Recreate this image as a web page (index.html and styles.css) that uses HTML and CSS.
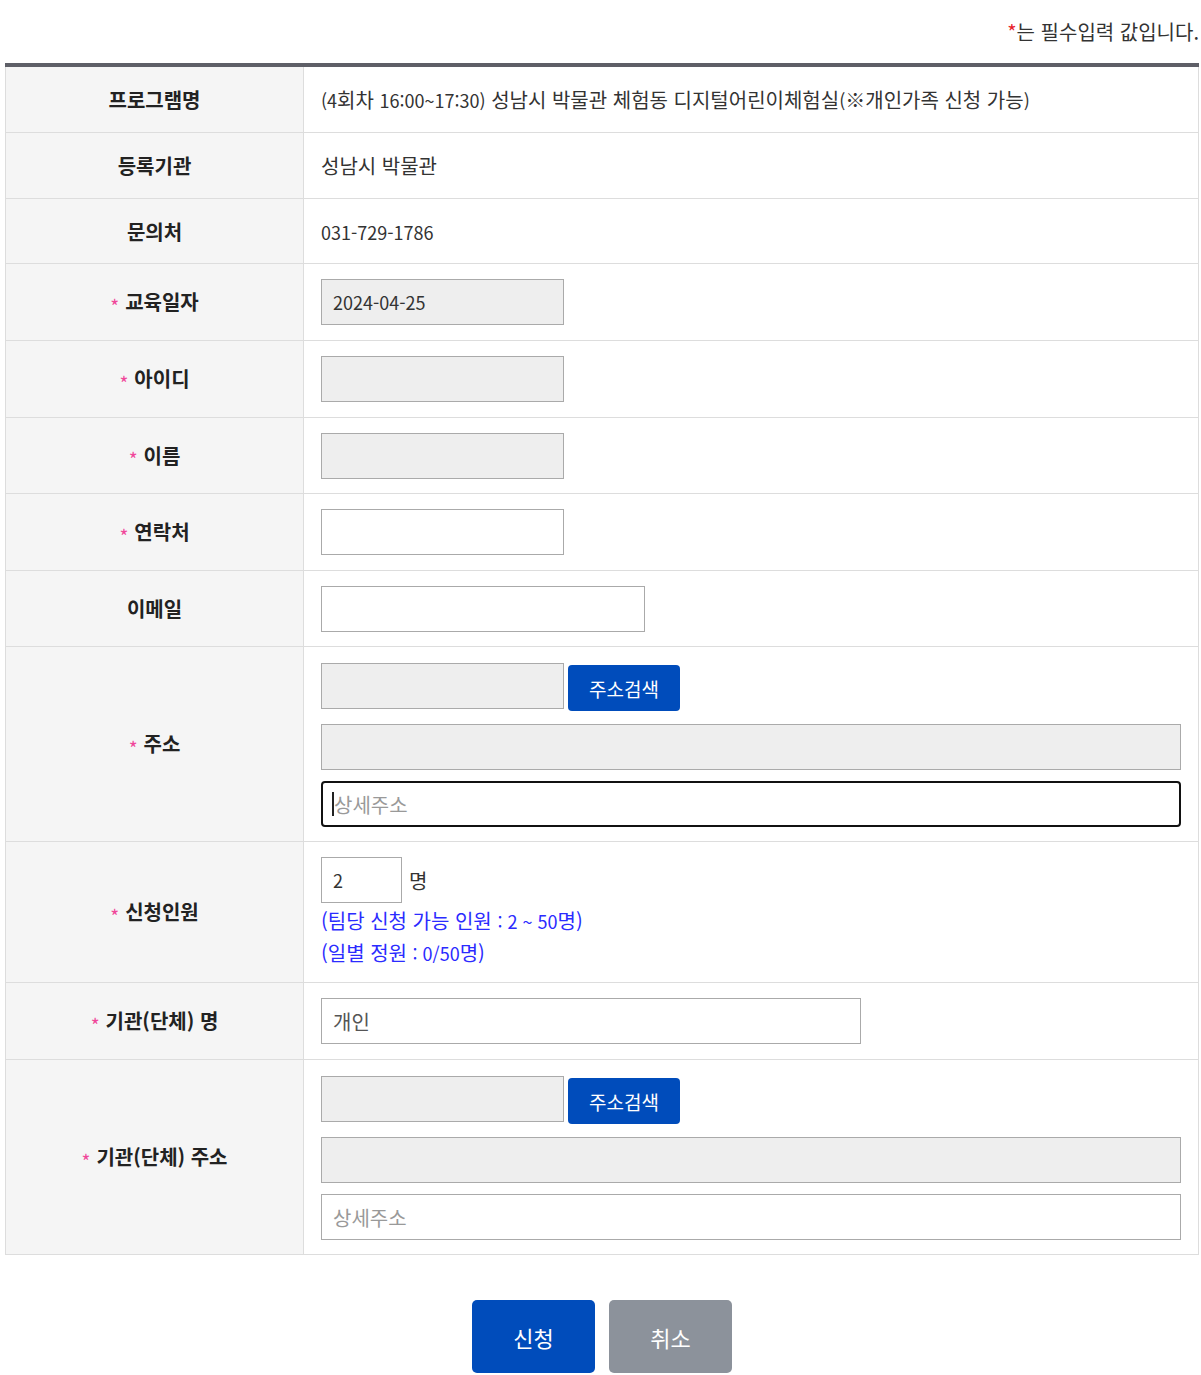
FILE: index.html
```html
<!DOCTYPE html>
<html lang="ko">
<head>
<meta charset="utf-8">
<title>교육 신청</title>
<link rel="stylesheet" href="styles.css">
</head>
<body>
<div class="wrap">
  <p class="note"><span class="star">*</span>는 필수입력 값입니다.</p>
  <table class="form">
    <colgroup><col class="c-th"><col></colgroup>
    <tbody>
      <tr>
        <th>프로그램명</th>
        <td class="txt"><span class="num">(4</span>회차 <span class="num">16:00~17:30)</span> 성남시 박물관 체험동 디지털어린이체험실<span class="num">(</span>※개인가족 신청 가능<span class="num">)</span></td>
      </tr>
      <tr>
        <th>등록기관</th>
        <td class="txt">성남시 박물관</td>
      </tr>
      <tr>
        <th>문의처</th>
        <td class="txt short"><span class="num">031-729-1786</span></td>
      </tr>
      <tr>
        <th><span class="req">*</span>교육일자</th>
        <td><input class="inp ro numv" type="text" value="2024-04-25" readonly></td>
      </tr>
      <tr>
        <th><span class="req">*</span>아이디</th>
        <td><input class="inp ro" type="text" readonly></td>
      </tr>
      <tr>
        <th><span class="req">*</span>이름</th>
        <td class="tight"><input class="inp ro" type="text" readonly></td>
      </tr>
      <tr>
        <th><span class="req">*</span>연락처</th>
        <td><input class="inp" type="text"></td>
      </tr>
      <tr>
        <th>이메일</th>
        <td class="tight"><input class="inp w-mail" type="text"></td>
      </tr>
      <tr>
        <th><span class="req">*</span>주소</th>
        <td class="addr">
          <div class="zip-line">
            <input class="inp ro" type="text" readonly>
            <button class="btn-search" type="button">주소검색</button>
          </div>
          <input class="inp ro full mt15" type="text" readonly>
          <input class="inp full mt11 focus" type="text" placeholder="상세주소">
        </td>
      </tr>
      <tr>
        <th><span class="req">*</span>신청인원</th>
        <td class="people">
          <div class="num-line">
            <input class="inp w-num numv" type="text" value="2">
            <span class="unit">명</span>
          </div>
          <p class="info first">(팀당 신청 가능 인원 <span class="num">: 2 ~ 50</span>명)</p>
          <p class="info">(일별 정원 <span class="num">: 0/50</span>명)</p>
        </td>
      </tr>
      <tr>
        <th><span class="req">*</span>기관(단체) 명</th>
        <td><input class="inp w-org gray" type="text" value="개인"></td>
      </tr>
      <tr>
        <th><span class="req">*</span>기관(단체) 주소</th>
        <td class="addr">
          <div class="zip-line">
            <input class="inp ro" type="text" readonly>
            <button class="btn-search" type="button">주소검색</button>
          </div>
          <input class="inp ro full mt15" type="text" readonly>
          <input class="inp full mt11" type="text" placeholder="상세주소">
        </td>
      </tr>
    </tbody>
  </table>
  <div class="actions">
    <button class="btn btn-apply" type="button">신청</button>
    <button class="btn btn-cancel" type="button">취소</button>
  </div>
</div>
</body>
</html>
```

FILE: styles.css
```css
* { box-sizing: border-box; }
html, body { margin: 0; padding: 0; background: #fff; }
body {
  font-family: "Noto Sans CJK KR", "Noto Sans", "Liberation Sans", sans-serif;
  color: #333;
  font-size: 20px;
}
.wrap {
  width: 1194px;
  margin-left: 5px;
}
.note {
  margin: 0;
  padding-top: 18px;
  height: 63px;
  line-height: 28px;
  text-align: right;
  font-size: 20px;
  color: #333;
  white-space: nowrap;
}
.star { color: #e8222c; }
.num { font-size: 18px; line-height: 1; }

.form {
  width: 100%;
  border-collapse: collapse;
  border-top: 4px solid #5e5f67;
  border-left: 1px solid #ddd;
  border-right: 1px solid #ddd;
  table-layout: fixed;
}
.c-th { width: 298px; }
.form th {
  background: #f5f5f5;
  border-right: 1px solid #ddd;
  border-bottom: 1px solid #ddd;
  font-weight: 700;
  font-size: 20px;
  color: #222;
  text-align: center;
  vertical-align: middle;
  padding: 0 10px;
  line-height: 25px;
}
.form td {
  border-bottom: 1px solid #ddd;
  padding: 15px 17px;
  vertical-align: middle;
  line-height: normal;
}
.form td.tight { padding-bottom: 14px; }
.form td.txt {
  padding: 20px 17px;
  height: 66px;
  line-height: 25px;
  color: #333;
}
.form td.txt.short { padding-bottom: 19px; height: 65px; }
.req {
  display: inline-block;
  color: #f0479a;
  font-size: 19px;
  line-height: 1;
  font-weight: 400;
  margin-right: 6px;
  vertical-align: middle;
}
.inp {
  display: block;
  width: 243px;
  height: 46px;
  margin: 0;
  border: 1px solid #aaa;
  background: #fff;
  padding: 0 11px;
  font-family: inherit;
  font-size: 20px;
  color: #333;
  outline: none;
  border-radius: 0;
}
.inp.numv { font-size: 18px; }
.inp::placeholder { color: #999; }
.inp.ro { background: #eee; }
.inp.gray { color: #555; }
.w-mail { width: 324px; }
.w-num { width: 81px; }
.w-org { width: 540px; }
.inp.full { width: 100%; }
.mt15 { margin-top: 15px; }
.mt11 { margin-top: 11px; }
.inp.focus {
  border: 2px solid #111;
  border-radius: 4px;
  padding-left: 11px;
  background: #fff linear-gradient(#222, #222) no-repeat 9px 50% / 2px 24px;
}

.form td.addr { padding: 16px 17px 14px; }
.zip-line {
  display: flex;
  align-items: flex-start;
  gap: 4px;
  height: 46px;
}
.btn-search {
  margin-top: 2px;
  width: 112px;
  height: 46px;
  border: 0;
  border-radius: 4px;
  background: #004cbb;
  color: #fff;
  font-family: inherit;
  font-size: 19px;
  cursor: pointer;
}

.form td.people { padding: 15px 17px 13px; }
.num-line { display: flex; align-items: center; }
.unit { margin-left: 7px; color: #333; font-size: 20px; }
.info {
  margin: 0;
  line-height: 32px;
  color: #2b2bff;
  font-size: 20px;
}
.info.first { margin-top: 2px; }

.actions {
  display: flex;
  justify-content: center;
  gap: 14px;
  margin-top: 45px;
}
.btn {
  width: 123px;
  height: 73px;
  border: 0;
  border-radius: 5px;
  color: #fff;
  font-family: inherit;
  font-size: 22px;
  cursor: pointer;
}
.btn-apply { background: #004cbb; }
.btn-cancel { background: #8c929b; }
```
